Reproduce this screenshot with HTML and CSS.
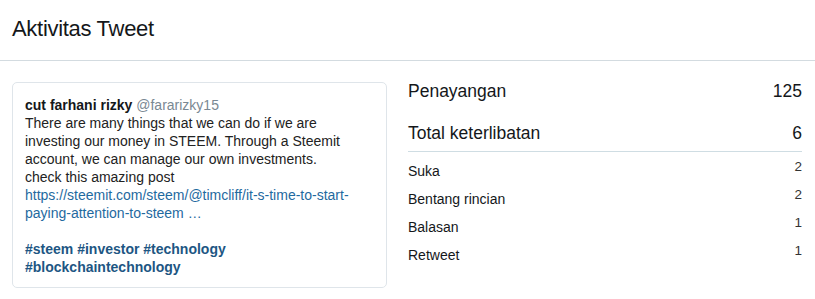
FILE: index.html
```html
<!DOCTYPE html>
<html lang="id">
<head>
    <meta charset="UTF-8">
    <meta name="viewport" content="width=device-width, initial-scale=1.0">
    <title>Aktivitas Tweet</title>
    <link rel="stylesheet" href="styles.css">
</head>
<body>
    <!-- judul -->
    <header class="page-header">
        <h1>Aktivitas Tweet</h1>
    </header>

    <main class="content">
        <!-- kartu tweet -->
        <div class="tweet-card">
            <div class="tweet-author">
                <span class="author-name">cut farhani rizky</span>
                <span class="author-handle">@fararizky15</span>
            </div>
            <p class="tweet-text">
                There are many things that we can do if we are investing our money in STEEM. Through a Steemit account, we can manage our own investments.<br>
                check this amazing post<br>
                <a class="link" href="#">https://steemit.com/steem/@timcliff/it-s-time-to-start-paying-attention-to-steem …</a><br><br>
                <a class="tag" href="#">#steem</a> <a class="tag" href="#">#investor</a> <a class="tag" href="#">#technology</a>
                <a class="tag" href="#">#blockchaintechnology</a>
            </p>
        </div>

        <!-- statistik -->
        <div class="stats">
            <div class="stat-main">
                <span>Penayangan</span>
                <span>125</span>
            </div>
            <div class="stat-main stat-total">
                <span>Total keterlibatan</span>
                <span>6</span>
            </div>
            <div class="stat-list">
                <div class="stat-row"><span>Suka</span><span class="num">2</span></div>
                <div class="stat-row"><span>Bentang rincian</span><span class="num">2</span></div>
                <div class="stat-row"><span>Balasan</span><span class="num">1</span></div>
                <div class="stat-row"><span>Retweet</span><span class="num">1</span></div>
            </div>
        </div>
    </main>
</body>
</html>
```

FILE: styles.css
```css
* {
    margin: 0;
    padding: 0;
    box-sizing: border-box;
}

body {
    font-family: "Liberation Sans", Arial, sans-serif;
    background-color: #fff;
    color: #14171a;
}

/* judul */
.page-header {
    height: 61px;
    padding: 16px 12px 0;
    border-bottom: 1px solid #d3dbe0;
}

.page-header h1 {
    font-size: 22px;
    font-weight: normal;
    line-height: 26px;
    letter-spacing: -0.3px;
}

/* konten */
.content {
    display: flex;
    gap: 21px;
    padding: 21px 13px 0 12px;
}

.tweet-card {
    width: 375px;
    height: 206px;
    flex-shrink: 0;
    border: 1px solid #dfe5ea;
    border-radius: 5px;
    padding: 13px 12px 0;
    font-size: 14px;
    line-height: 18px;
}

.author-name {
    font-weight: bold;
}

.author-handle {
    color: #7a8893;
}

.tweet-text {
    color: #222;
}

.link {
    color: #1f6aa0;
    text-decoration: none;
}

.tag {
    color: #1d5683;
    font-weight: bold;
    text-decoration: none;
}

/* statistik */
.stats {
    flex: 1;
}

.stat-main {
    display: flex;
    justify-content: space-between;
    font-size: 17.5px;
    line-height: 18px;
    margin-bottom: 24px;
}

.stat-total {
    margin-bottom: 0;
    padding-bottom: 9px;
    border-bottom: 1px solid #cfdde3;
}

.stat-list {
    padding-top: 5px;
}

.stat-row {
    display: flex;
    justify-content: space-between;
    height: 28px;
    font-size: 14px;
    line-height: 28px;
}

.stat-row .num {
    font-size: 13.5px;
    line-height: 20px;
    color: #333;
}
```
